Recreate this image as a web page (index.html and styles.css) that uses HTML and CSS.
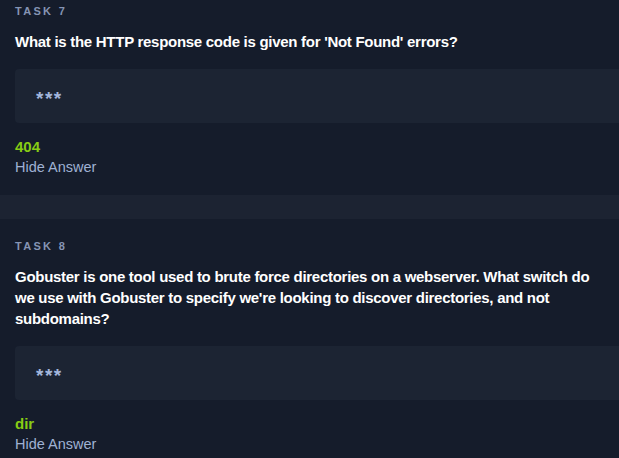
FILE: index.html
```html
<!DOCTYPE html>
<html lang="en">
<head>
<meta charset="utf-8">
<title>Tasks</title>
<link rel="stylesheet" href="styles.css">
</head>
<body>
<div class="page">
  <section class="task">
    <div class="task-label">TASK 7</div>
    <p class="question">What is the HTTP response code is given for 'Not Found' errors?</p>
    <div class="answer-box"><span class="stars">***</span></div>
    <div class="answer">404</div>
    <div class="hide">Hide Answer</div>
  </section>
  <div class="divider"></div>
  <section class="task">
    <div class="task-label">TASK 8</div>
    <p class="question">Gobuster is one tool used to brute force directories on a webserver. What switch do we use with Gobuster to specify we're looking to discover directories, and not subdomains?</p>
    <div class="answer-box"><span class="stars">***</span></div>
    <div class="answer">dir</div>
    <div class="hide">Hide Answer</div>
  </section>
</div>
</body>
</html>
```

FILE: styles.css
```css
html, body {
  margin: 0;
  padding: 0;
  background: #151c2b;
}
body {
  font-family: "Liberation Sans", Arial, sans-serif;
  overflow: hidden;
}
.page {
  margin-top: -16px;
}
.task {
  padding: 19px 0 17px 15px;
}
.task-label {
  font-size: 11px;
  line-height: 16px;
  font-weight: 700;
  letter-spacing: 2.3px;
  color: #8594b4;
}
.question {
  margin: 12px 12px 0 0;
  font-size: 15px;
  line-height: 21px;
  font-weight: 700;
  letter-spacing: -0.28px;
  color: #ffffff;
}
.answer-box {
  margin-top: 17px;
  height: 54px;
  background: #1c2433;
  border-radius: 4px 0 0 4px;
  display: flex;
  align-items: center;
  padding-left: 21px;
}
.stars {
  font-size: 19px;
  line-height: 19px;
  padding-top: 5px;
  letter-spacing: 1.5px;
  color: #a3b6db;
  font-weight: 700;
}
.answer {
  margin-top: 13px;
  font-size: 15px;
  line-height: 21px;
  font-weight: 700;
  color: #88cc14;
}
.hide {
  font-size: 14.5px;
  line-height: 21px;
  color: #9fb1d3;
}
.divider {
  height: 24px;
  background: #1c2332;
}
```
